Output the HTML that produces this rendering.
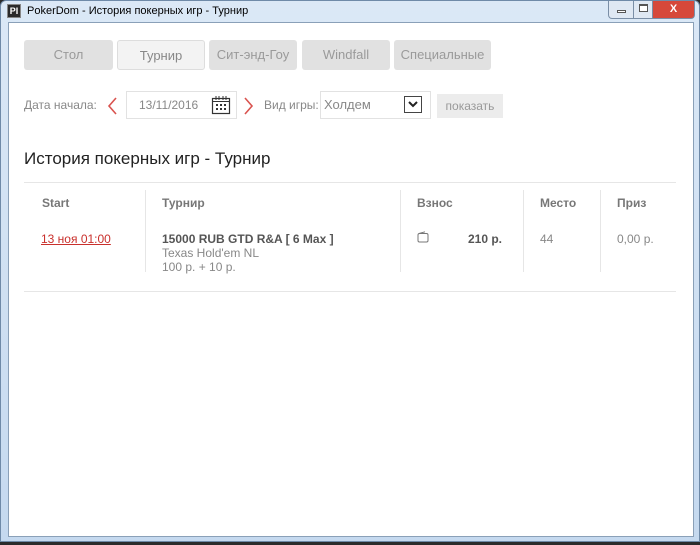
<!DOCTYPE html>
<html><head><meta charset="utf-8"><style>
*{margin:0;padding:0;box-sizing:border-box}
body{width:700px;height:545px;background:#2b2b2b;font-family:"Liberation Sans",sans-serif;position:relative;overflow:hidden}
.win{position:absolute;left:0;top:0;width:700px;height:542px;background:linear-gradient(#dbe8f6,#c5d9ef);border:1px solid #6f8aa8;border-radius:6px 6px 0 0}
.title{position:absolute;left:26px;top:4px;font-size:11px;color:#000}
.logo{position:absolute;left:6px;top:3px;width:14px;height:14px;background:#2a2a2a;border:1px solid #888;color:#fff;font-size:9px;font-weight:bold;line-height:12px;text-align:center}
.cnt{position:absolute;left:7px;top:21px;width:686px;height:515px;background:#fff;border:1px solid #8aa0b8}
.ctl{position:absolute;top:0;height:18px;border:1px solid #7a8ea6;border-top:none}
.a{position:absolute;font-size:12px;color:#888}
.tab{position:absolute;top:40px;height:30px;background:#e1e1e1;border-radius:3px;color:#9a9a9a;font-size:13px;text-align:center;line-height:30px}
.vl{position:absolute;width:1px;background:#e6e6e6;top:190px;height:82px}
.h{position:absolute;top:196px;font-size:12px;font-weight:bold;color:#777}
.t{position:absolute;font-size:12px;color:#888}
</style></head><body>
<div class="win">
<div class="logo">PI</div>
<div class="title">PokerDom - История покерных игр - Турнир</div>
<div class="ctl" style="left:607px;width:26px;background:#dfe8f3;border-radius:0 0 0 4px"><div style="position:absolute;left:8px;top:9px;width:9px;height:3px;border:1px solid #555;background:#fff"></div></div>
<div class="ctl" style="left:632px;width:20px;background:#dfe8f3"><div style="position:absolute;left:5px;top:3px;width:9px;height:8px;border:1px solid #555;border-top-width:2px;background:#fff"></div></div>
<div class="ctl" style="left:651px;width:43px;background:#d6483a;border-radius:0 0 4px 0;color:#fff;font-size:11px;font-weight:bold;text-align:center;line-height:16px">X</div>
<div class="cnt"></div>
</div>
<div class="tab" style="left:24px;width:89px">Стол</div>
<div class="tab" style="left:117px;width:88px;background:#f3f3f3;border:1px solid #ddd;color:#888">Турнир</div>
<div class="tab" style="left:209px;width:88px">Сит-энд-Гоу</div>
<div class="tab" style="left:302px;width:88px">Windfall</div>
<div class="tab" style="left:394px;width:97px">Специальные</div>

<div class="a" style="left:24px;top:98px">Дата начала:</div>
<svg style="position:absolute;left:106px;top:96px" width="12" height="20"><path d="M10 2L3 10L10 18" stroke="#d9534f" stroke-width="1.6" fill="none"/></svg>
<div style="position:absolute;left:126px;top:91px;width:111px;height:28px;border:1px solid #e2e2e2"></div>
<div class="a" style="left:139px;top:98px">13/11/2016</div>
<svg style="position:absolute;left:211px;top:95px" width="20" height="20"><rect x="1.5" y="3.5" width="17" height="15" fill="none" stroke="#333" stroke-width="1.2"/><line x1="1.5" y1="6.5" x2="18.5" y2="6.5" stroke="#333"/><path d="M5 1v4M8 1v4M12 1v4M15 1v4" stroke="#333"/><g fill="#333"><rect x="5" y="9" width="2" height="2"/><rect x="9" y="9" width="2" height="2"/><rect x="13" y="9" width="2" height="2"/><rect x="5" y="13" width="2" height="2"/><rect x="9" y="13" width="2" height="2"/><rect x="13" y="13" width="2" height="2"/></g></svg>
<svg style="position:absolute;left:243px;top:96px" width="12" height="20"><path d="M2 2L9 10L2 18" stroke="#d9534f" stroke-width="1.6" fill="none"/></svg>
<div class="a" style="left:264px;top:98px">Вид игры:</div>
<div style="position:absolute;left:320px;top:91px;width:111px;height:28px;border:1px solid #e2e2e2"></div>
<div class="a" style="left:324px;top:97px;font-size:13px">Холдем</div>
<svg style="position:absolute;left:404px;top:96px" width="18" height="17"><rect x="0.5" y="0.5" width="17" height="16" fill="#fff" stroke="#444"/><path d="M5 6l4 4 4-4" stroke="#222" stroke-width="2" fill="none"/></svg>
<div style="position:absolute;left:437px;top:94px;width:66px;height:24px;background:#ececec;color:#999;font-size:12px;text-align:center;line-height:24px">показать</div>

<div style="position:absolute;left:24px;top:149px;font-size:17px;color:#222">История покерных игр - Турнир</div>
<div style="position:absolute;left:24px;top:182px;width:652px;height:1px;background:#e6e6e6"></div>
<div class="vl" style="left:145px"></div><div class="vl" style="left:400px"></div><div class="vl" style="left:523px"></div><div class="vl" style="left:600px"></div>
<div class="h" style="left:42px">Start</div>
<div class="h" style="left:162px">Турнир</div>
<div class="h" style="left:417px">Взнос</div>
<div class="h" style="left:540px">Место</div>
<div class="h" style="left:617px">Приз</div>
<div class="t" style="left:41px;top:232px;color:#c9302c;text-decoration:underline">13 ноя 01:00</div>
<div class="t" style="left:162px;top:232px;font-weight:bold;color:#555">15000 RUB GTD R&amp;A [ 6 Max ]</div>
<div class="t" style="left:162px;top:246px">Texas Hold'em NL</div>
<div class="t" style="left:162px;top:260px">100 р. + 10 р.</div>
<svg style="position:absolute;left:417px;top:231px" width="13" height="12"><rect x="1" y="2.5" width="10" height="8.5" rx="1.5" fill="none" stroke="#777"/><path d="M2 2.5L8 0.8" stroke="#777" fill="none"/></svg>
<div class="t" style="left:468px;top:232px;font-weight:bold;color:#555">210 р.</div>
<div class="t" style="left:540px;top:232px">44</div>
<div class="t" style="left:617px;top:232px">0,00 р.</div>
<div style="position:absolute;left:24px;top:291px;width:652px;height:1px;background:#e6e6e6"></div>
</body></html>
